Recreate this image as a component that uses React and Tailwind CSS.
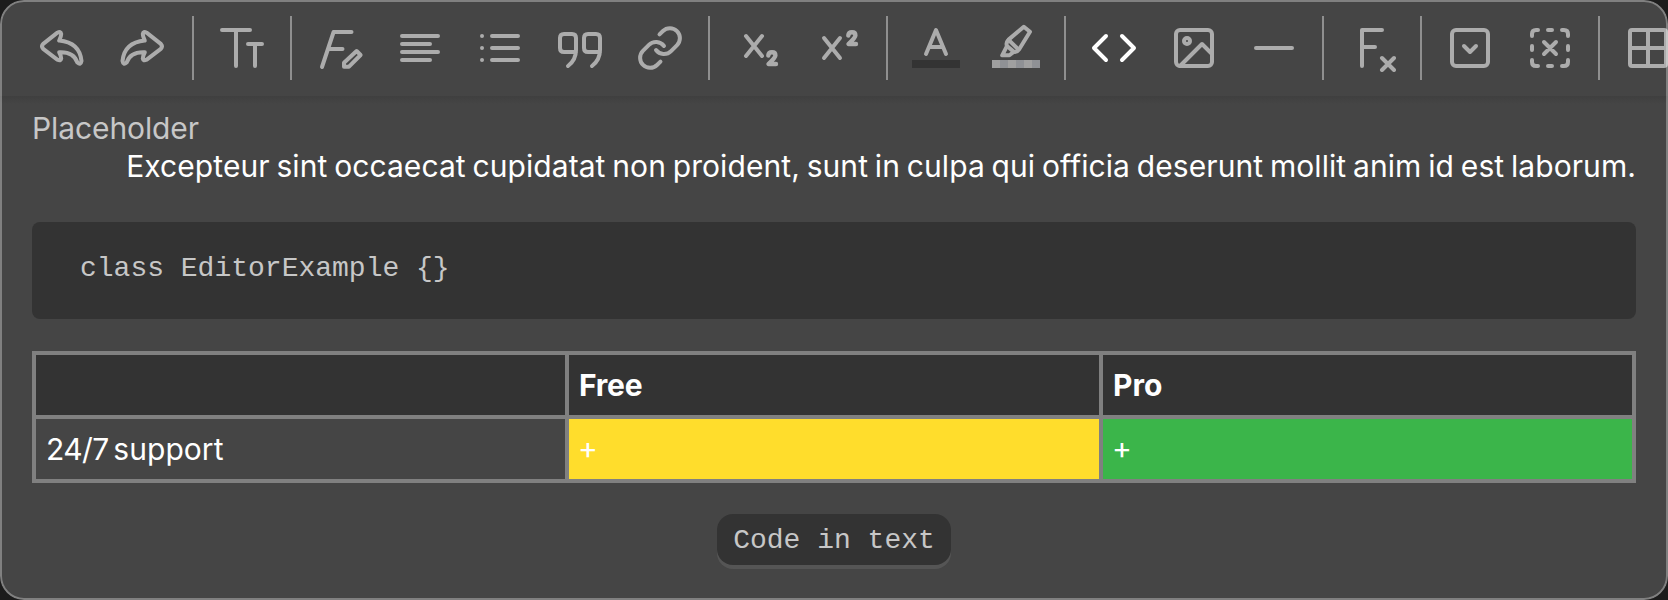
const iconProps = {
  width: 48,
  height: 48,
  viewBox: "0 0 48 48",
  fill: "none",
  stroke: "currentColor",
  strokeWidth: 4,
  strokeLinecap: "round",
  strokeLinejoin: "round",
};

const arrow =
  "M3.2 19.8L17.4 8.7Q20.8 6.8 21.2 10Q21.2 12.5 19.2 16.6Q39.5 18.5 41.5 37Q40.8 41.5 37.4 38.6Q33.8 27.5 19.2 28.2Q21.2 32 21.2 34.5Q20.6 37.4 17.6 35.8L3.2 24.8Q.9 22.3 3.2 19.8Z";

const icons = {
  undo: <path d={arrow} />,
  redo: <path d={arrow} transform="matrix(-1 0 0 1 44 0)" />,
  size: <path d="M4 6H32M18 6V42M30 20H44M37 20V42" />,
  style: (
    <>
      <path d="M35.5 8H17.6L6 43M12 25H26.5" />
      <path d="M28 42.7V38.8L40.6 27L44.6 31L33 42.7Z" />
    </>
  ),
  align: <path d="M6 12H42M6 20H34M6 28H42M6 36H34" />,
  list: <path d="M6 12H6.01M6 24H6.01M6 36H6.01M16 12H42M16 24H42M16 36H42" />,
  quote: (
    <path d="M20 28H8Q4 28 4 24V14Q4 10 8 10H16Q20 10 20 14V26Q20 36 12 42M44 28H32Q28 28 28 24V14Q28 10 32 10H40Q44 10 44 14V26Q44 36 36 42" />
  ),
  link: (
    <path d="M20 26A10 10 0 0 0 35.08 27.08L41.08 21.08A10 10 0 0 0 26.94 6.94L23.5 10.36M28 22A10 10 0 0 0 12.92 20.92L6.92 26.92A10 10 0 0 0 21.06 41.06L24.48 37.64" />
  ),
  sub: (
    <>
      <path d="M12 12L28 32M28 12L12 32" />
      <path d="M34.3 31.5Q34.6 28.2 38 28.2Q41.4 28.2 41.4 31.4Q41.4 33.4 34.5 40H42" strokeWidth="4.4" />
    </>
  ),
  sup: (
    <>
      <path d="M10 14L26 34M26 14L10 34" />
      <path d="M34.3 11.5Q34.6 8.2 38 8.2Q41.4 8.2 41.4 11.4Q41.4 13.4 34.5 20H42" strokeWidth="4.4" />
    </>
  ),
  color: <path d="M14 30L24 6L34 30M17.5 23H30.5" />,
  marker: (
    <>
      <path d="M31.8 2.8L38 7.8L27.2 25.3Q24.5 28.8 21.6 27.6L15 22Q13.6 18.6 16.6 15.6Z" />
      <path d="M16.6 15.9L26.2 25.2M14.8 22.4L10.2 31.3H17.4L21.6 28" />
    </>
  ),
  code: <path d="M32 36L44 24L32 12M16 12L4 24L16 36" />,
  image: (
    <>
      <rect x="6" y="6" width="36" height="36" rx="4" />
      <circle cx="17" cy="17" r="3" />
      <path d="M42 30L32 20L10 42" />
    </>
  ),
  minus: <path d="M6 24H42" />,
  clear: <path d="M14 42V6H34M14 23H27M34 34L46 46M46 34L34 46" />,
  details: (
    <>
      <rect x="6" y="6" width="36" height="36" rx="4" />
      <path d="M18 22L24 28L30 22" />
    </>
  ),
  remove: (
    <path d="M10 6Q6 6 6 10V12M38 6Q42 6 42 10V12M42 36V38Q42 42 38 42M10 42Q6 42 6 38V36M10 6H12M38 6H36M10 42H12M38 42H36M22 6H26M22 42H26M6 22V26M42 22V26M18 18L30 30M30 18L18 30" />
  ),
  table: (
    <>
      <rect x="6" y="6" width="36" height="36" rx="2" />
      <path d="M24 6V42M6 24H42" />
    </>
  ),
};

const groups = [
  ["undo", "redo"],
  ["size"],
  ["style", "align", "list", "quote", "link"],
  ["sub", "sup"],
  ["color", "marker"],
  ["code", "image", "minus"],
  ["clear"],
  ["details", "remove"],
  ["table"],
];

function Tool({ name }) {
  return (
    <button
      className={`relative flex h-24 w-20 shrink-0 items-center justify-center ${
        name === "code" ? "text-white" : "text-[#acacac]"
      }`}
    >
      <svg {...iconProps}>{icons[name]}</svg>
      {name === "color" && <span className="absolute left-4 top-[60px] h-2 w-12 bg-[#333333]" />}
      {name === "marker" && (
        <span className="absolute left-4 top-[60px] flex h-2 w-12">
          {[0, 1, 2].map((i) => (
            <span key={i} className="flex">
              <span className="size-2 bg-[#a0a0a0]" />
              <span className="size-2 bg-[#8f9195]" />
            </span>
          ))}
        </span>
      )}
    </button>
  );
}

function Toolbar() {
  return (
    <div className="flex h-24 shrink-0 items-center overflow-hidden pl-6">
      {groups.map((group, i) => (
        <div key={i} className="flex shrink-0 items-center">
          {i > 0 && <span className="mx-2 h-16 w-0.5 bg-[#8f8f8f]" />}
          {group.map((name) => (
            <Tool key={name} name={name} />
          ))}
        </div>
      ))}
    </div>
  );
}

export default function App() {
  return (
    <div className="h-[600px] w-[1668px] overflow-hidden bg-[#1c1c1c] font-['Inter',sans-serif] text-[30px] leading-[38px] text-white">
      <div className="relative flex h-full flex-col overflow-hidden rounded-3xl bg-[#454545]">
        <Toolbar />
        <div className="h-2 shrink-0 bg-linear-to-b from-[#3f3f3f] to-[#454545]" />
        <div className="flex flex-col px-8 pt-[5px]">
          <p className="whitespace-nowrap tracking-[-0.1px] text-[#c7c7c7]">Placeholder</p>
          <p className="whitespace-nowrap text-right tracking-[0.07px] [word-spacing:-1.7px]">
            Excepteur sint occaecat cupidatat non proident, sunt in culpa qui officia deserunt mollit anim id est
            laborum.
          </p>
          <pre className="mt-[37px] flex h-[97px] rounded-lg bg-[#333333] px-12 pt-7 font-['Liberation_Mono',monospace] text-[28px] text-[#c7c7c7]">
            class EditorExample {"{}"}
          </pre>
          <div className="mt-8 grid h-[132px] grid-cols-[529px_530px_529px] grid-rows-2 gap-1 bg-[#808080] p-1">
            <div className="bg-[#333333]" />
            <div className="flex items-center bg-[#333333] px-[10px] font-bold tracking-[-0.2px]">Free</div>
            <div className="flex items-center bg-[#333333] px-[10px] font-bold tracking-[0.1px]">Pro</div>
            <div className="flex items-center bg-[#454545] px-[10px] tracking-[0.05px]">
              <p className="[word-spacing:-4px]">
                <span className="tracking-[-0.55px]">24/7</span> support
              </p>
            </div>
            <div className="flex items-center bg-[#ffdd2c] px-[9px] pb-[3px]">+</div>
            <div className="flex items-center bg-[#3bb54a] px-[9px] pb-[3px]">+</div>
          </div>
          <div className="mt-[31px] flex justify-center">
            <code className="h-[51px] rounded-2xl bg-[#333333] px-4 pt-2 font-['Liberation_Mono',monospace] text-[28px] text-[#c7c7c7] shadow-[0_4px_0_#555555]">
              Code in text
            </code>
          </div>
        </div>
        <div className="pointer-events-none absolute inset-0 rounded-3xl border-2 border-white/32" />
      </div>
    </div>
  );
}
